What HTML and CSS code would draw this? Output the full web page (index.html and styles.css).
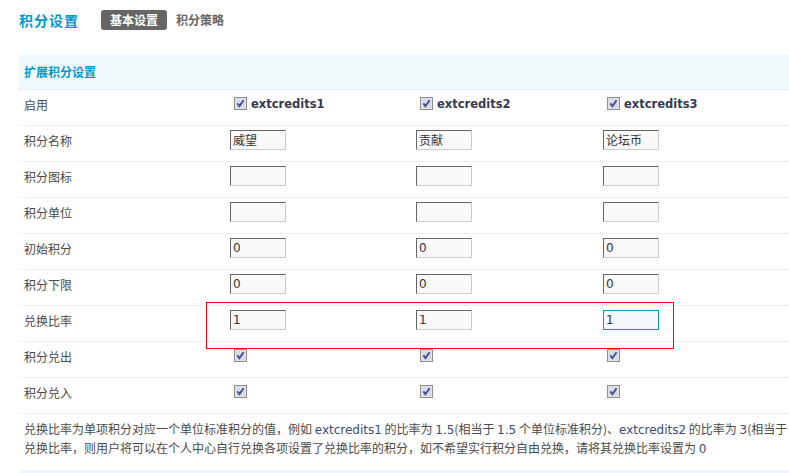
FILE: index.html
```html
<!DOCTYPE html>
<html lang="zh-CN">
<head>
<meta charset="utf-8">
<title>积分设置</title>
<link rel="stylesheet" href="styles.css">
</head>
<body>
<div class="page">
  <div class="topbar">
    <h1 class="title">积分设置</h1>
    <ul class="tabs">
      <li class="tab active">基本设置</li>
      <li class="tab">积分策略</li>
    </ul>
  </div>

  <div class="table">
    <div class="thead">扩展积分设置</div>

    <div class="row">
      <div class="label">启用</div>
      <div class="cell"><span class="chk"><svg width="13" height="13" viewBox="0 0 13 13"><rect x="0.5" y="0.5" width="12" height="12" fill="#e9e9e9" stroke="#8e8e8e"/><rect x="1.5" y="1.5" width="10" height="10" fill="#d9dbe3"/><path d="M3.4 6.4 L5.4 9.2 L9.6 3.2" fill="none" stroke="#3c4f96" stroke-width="1.9"/></svg></span><b class="credit">extcredits1</b></div>
      <div class="cell"><span class="chk"><svg width="13" height="13" viewBox="0 0 13 13"><rect x="0.5" y="0.5" width="12" height="12" fill="#e9e9e9" stroke="#8e8e8e"/><rect x="1.5" y="1.5" width="10" height="10" fill="#d9dbe3"/><path d="M3.4 6.4 L5.4 9.2 L9.6 3.2" fill="none" stroke="#3c4f96" stroke-width="1.9"/></svg></span><b class="credit">extcredits2</b></div>
      <div class="cell"><span class="chk"><svg width="13" height="13" viewBox="0 0 13 13"><rect x="0.5" y="0.5" width="12" height="12" fill="#e9e9e9" stroke="#8e8e8e"/><rect x="1.5" y="1.5" width="10" height="10" fill="#d9dbe3"/><path d="M3.4 6.4 L5.4 9.2 L9.6 3.2" fill="none" stroke="#3c4f96" stroke-width="1.9"/></svg></span><b class="credit">extcredits3</b></div>
      <div class="cell"></div>
    </div>

    <div class="row">
      <div class="label">积分名称</div>
      <div class="cell"><input class="txt" type="text" value="威望"></div>
      <div class="cell"><input class="txt" type="text" value="贡献"></div>
      <div class="cell"><input class="txt" type="text" value="论坛币"></div>
      <div class="cell"></div>
    </div>

    <div class="row">
      <div class="label">积分图标</div>
      <div class="cell"><input class="txt" type="text" value=""></div>
      <div class="cell"><input class="txt" type="text" value=""></div>
      <div class="cell"><input class="txt" type="text" value=""></div>
      <div class="cell"></div>
    </div>

    <div class="row">
      <div class="label">积分单位</div>
      <div class="cell"><input class="txt" type="text" value=""></div>
      <div class="cell"><input class="txt" type="text" value=""></div>
      <div class="cell"><input class="txt" type="text" value=""></div>
      <div class="cell"></div>
    </div>

    <div class="row">
      <div class="label">初始积分</div>
      <div class="cell"><input class="txt" type="text" value="0"></div>
      <div class="cell"><input class="txt" type="text" value="0"></div>
      <div class="cell"><input class="txt" type="text" value="0"></div>
      <div class="cell"></div>
    </div>

    <div class="row">
      <div class="label">积分下限</div>
      <div class="cell"><input class="txt" type="text" value="0"></div>
      <div class="cell"><input class="txt" type="text" value="0"></div>
      <div class="cell"><input class="txt" type="text" value="0"></div>
      <div class="cell"></div>
    </div>

    <div class="row">
      <div class="label">兑换比率</div>
      <div class="cell"><input class="txt" type="text" value="1"></div>
      <div class="cell"><input class="txt" type="text" value="1"></div>
      <div class="cell"><input class="txt focus" type="text" value="1"></div>
      <div class="cell"></div>
    </div>

    <div class="row">
      <div class="label">积分兑出</div>
      <div class="cell"><span class="chk"><svg width="13" height="13" viewBox="0 0 13 13"><rect x="0.5" y="0.5" width="12" height="12" fill="#e9e9e9" stroke="#8e8e8e"/><rect x="1.5" y="1.5" width="10" height="10" fill="#d9dbe3"/><path d="M3.4 6.4 L5.4 9.2 L9.6 3.2" fill="none" stroke="#3c4f96" stroke-width="1.9"/></svg></span></div>
      <div class="cell"><span class="chk"><svg width="13" height="13" viewBox="0 0 13 13"><rect x="0.5" y="0.5" width="12" height="12" fill="#e9e9e9" stroke="#8e8e8e"/><rect x="1.5" y="1.5" width="10" height="10" fill="#d9dbe3"/><path d="M3.4 6.4 L5.4 9.2 L9.6 3.2" fill="none" stroke="#3c4f96" stroke-width="1.9"/></svg></span></div>
      <div class="cell"><span class="chk"><svg width="13" height="13" viewBox="0 0 13 13"><rect x="0.5" y="0.5" width="12" height="12" fill="#e9e9e9" stroke="#8e8e8e"/><rect x="1.5" y="1.5" width="10" height="10" fill="#d9dbe3"/><path d="M3.4 6.4 L5.4 9.2 L9.6 3.2" fill="none" stroke="#3c4f96" stroke-width="1.9"/></svg></span></div>
      <div class="cell"></div>
    </div>

    <div class="row">
      <div class="label">积分兑入</div>
      <div class="cell"><span class="chk"><svg width="13" height="13" viewBox="0 0 13 13"><rect x="0.5" y="0.5" width="12" height="12" fill="#e9e9e9" stroke="#8e8e8e"/><rect x="1.5" y="1.5" width="10" height="10" fill="#d9dbe3"/><path d="M3.4 6.4 L5.4 9.2 L9.6 3.2" fill="none" stroke="#3c4f96" stroke-width="1.9"/></svg></span></div>
      <div class="cell"><span class="chk"><svg width="13" height="13" viewBox="0 0 13 13"><rect x="0.5" y="0.5" width="12" height="12" fill="#e9e9e9" stroke="#8e8e8e"/><rect x="1.5" y="1.5" width="10" height="10" fill="#d9dbe3"/><path d="M3.4 6.4 L5.4 9.2 L9.6 3.2" fill="none" stroke="#3c4f96" stroke-width="1.9"/></svg></span></div>
      <div class="cell"><span class="chk"><svg width="13" height="13" viewBox="0 0 13 13"><rect x="0.5" y="0.5" width="12" height="12" fill="#e9e9e9" stroke="#8e8e8e"/><rect x="1.5" y="1.5" width="10" height="10" fill="#d9dbe3"/><path d="M3.4 6.4 L5.4 9.2 L9.6 3.2" fill="none" stroke="#3c4f96" stroke-width="1.9"/></svg></span></div>
      <div class="cell"></div>
    </div>

    <div class="tips">兑换比率为单项积分对应一个单位标准积分的值，例如 <span class="en">extcredits1</span> 的比率为 <span class="en">1.5</span>(相当于 <span class="en">1.5</span> 个单位标准积分)、<span class="en">extcredits2</span> 的比率为 <span class="en">3</span>(相当于 <span class="en">3</span> 个单位标准积分)、<span class="en">extcredits3</span> 的比率为 <span class="en">15</span>(相当于 <span class="en">15</span> 个单位标准积分)，一旦设置<br>兑换比率，则用户将可以在个人中心自行兑换各项设置了兑换比率的积分，如不希望实行积分自由兑换，请将其兑换比率设置为 <span class="en">0</span></div>

    <div class="tfoot"></div>
  </div>

  <div class="highlight"></div>
</div>
</body>
</html>
```

FILE: styles.css
```css
html, body {
  margin: 0;
  padding: 0;
  overflow: hidden;
  background: #fff;
}

body {
  font-family: "DejaVu Sans", "Noto Sans CJK SC", sans-serif;
  font-size: 12px;
  color: #444;
}

.page {
  position: relative;
  width: 1100px;
  padding-left: 19px;
}

.topbar {
  display: flex;
  align-items: center;
  height: 20px;
  padding-top: 10px;
  margin-bottom: 24px;
}

.title {
  margin: 0 22px 0 0;
  font-family: "Noto Sans CJK SC", sans-serif;
  font-size: 14px;
  font-weight: bold;
  line-height: 20px;
  color: #0099cc;
  letter-spacing: 1px;
}

.tabs {
  display: flex;
  margin: 0;
  padding: 0;
  list-style: none;
}

.tab {
  height: 20px;
  padding: 0 9px;
  line-height: 20px;
  font-family: "Noto Sans CJK SC", sans-serif;
  font-size: 12px;
  font-weight: bold;
  color: #666;
  border-radius: 3px;
}

.tab.active {
  background: #666;
  color: #fff;
}

.table {
  width: 100%;
}

.thead {
  height: 35px;
  line-height: 35px;
  padding-left: 5px;
  background: #f2f9fd;
  border-bottom: 1px dotted #d6e6f2;
  font-family: "Noto Sans CJK SC", sans-serif;
  font-weight: bold;
  color: #0099cc;
}

.row {
  display: grid;
  grid-template-columns: 211px 186px 187px 1fr;
  align-items: center;
  height: 35px;
  border-bottom: 1px dotted #d6e6f2;
}

.label {
  padding: 2px 0 0 5px;
  font-family: "Noto Sans CJK SC", sans-serif;
  color: #4a4a4a;
}

.cell {
  display: flex;
  align-items: center;
}

.chk {
  display: inline-flex;
  width: 13px;
  height: 13px;
  margin: 0 4px 0 4px;
}

.chk svg {
  display: block;
}

.credit {
  font-family: "DejaVu Sans", sans-serif;
  font-size: 11.5px;
  font-weight: bold;
  color: #343a4e;
}

.txt {
  box-sizing: border-box;
  width: 56px;
  height: 20px;
  margin: 0;
  padding: 0 2px;
  border: 1px solid;
  border-color: #666 #ccc #ccc #666;
  background: #f9f9f9;
  font-family: "DejaVu Sans", "Noto Sans CJK SC", sans-serif;
  font-size: 12px;
  color: #333;
  outline: none;
}

.txt.focus {
  border-color: #0099cc;
  background: #f4f8fd;
}

.tips {
  padding: 6px 5px 12px;
  line-height: 18px;
  white-space: nowrap;
  font-family: "Noto Sans CJK SC", sans-serif;
  color: #4a4a4a;
}

.tips .en {
  font-family: "DejaVu Sans", sans-serif;
  color: #3d4a78;
}

.tfoot {
  height: 20px;
  background: #eef6fc;
}

.highlight {
  position: absolute;
  left: 206px;
  top: 302px;
  box-sizing: border-box;
  width: 468px;
  height: 47px;
  border: 1px solid #f00;
}
```
